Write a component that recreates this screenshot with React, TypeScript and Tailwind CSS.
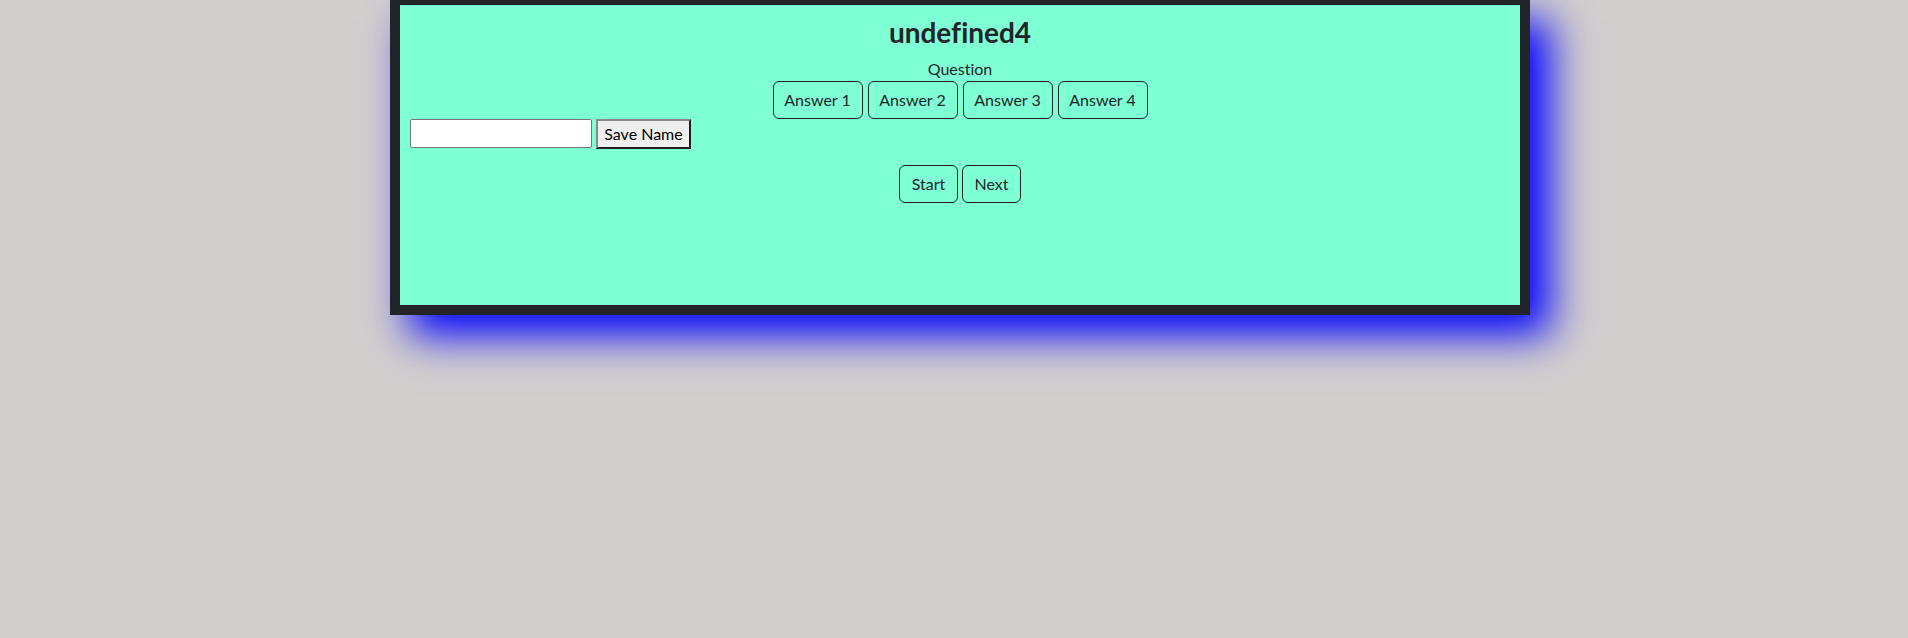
export default function App() {
  const answers = ['Answer 1', 'Answer 2', 'Answer 3', 'Answer 4']

  return (
    <div className="min-h-screen bg-[#d2cece] font-['Lato',sans-serif] text-[16px] text-[#212529] [font-variant-ligatures:none]">
      <div className="ml-[390px] w-[1140px] h-[315px] border-[10px] border-t-[5px] border-[#212529] bg-[#7fffd4] shadow-[20px_20px_40px_#0000ff]">
        <div className="p-[10px]">
          <h3 className="text-center text-[28px] leading-[33px] font-bold mb-2 pt-[0.5px]">undefined4</h3>
          <div className="text-center leading-6">Question</div>
          <div className="flex justify-center gap-[5px]">
            {answers.map((a) => (
              <button
                key={a}
                type="button"
                className="w-[90px] h-[38px] border border-[#212529] rounded-[6px] leading-6 text-[#212529]"
              >
                {a}
              </button>
            ))}
          </div>

          {/* nome do jogador */}
          <div className="flex items-start gap-1">
            <input
              type="text"
              className="w-[182px] h-[29px] bg-white border border-[#767676] rounded-[2px] px-1 outline-none"
            />
            <button
              type="button"
              className="w-[95px] h-[30px] bg-[#efefef] border-2 border-t-[#8a8a8a] border-l-[#8a8a8a] border-r-[#1e1e1e] border-b-[#1e1e1e] leading-6 text-black"
            >
              Save Name
            </button>
          </div>

          <div className="mt-4 flex justify-center gap-1">
            <button
              type="button"
              className="w-[59px] h-[38px] border border-[#212529] rounded-[6px] leading-6"
            >
              Start
            </button>
            <button
              type="button"
              className="w-[59px] h-[38px] border border-[#212529] rounded-[6px] leading-6"
            >
              Next
            </button>
          </div>
        </div>
      </div>
    </div>
  )
}
